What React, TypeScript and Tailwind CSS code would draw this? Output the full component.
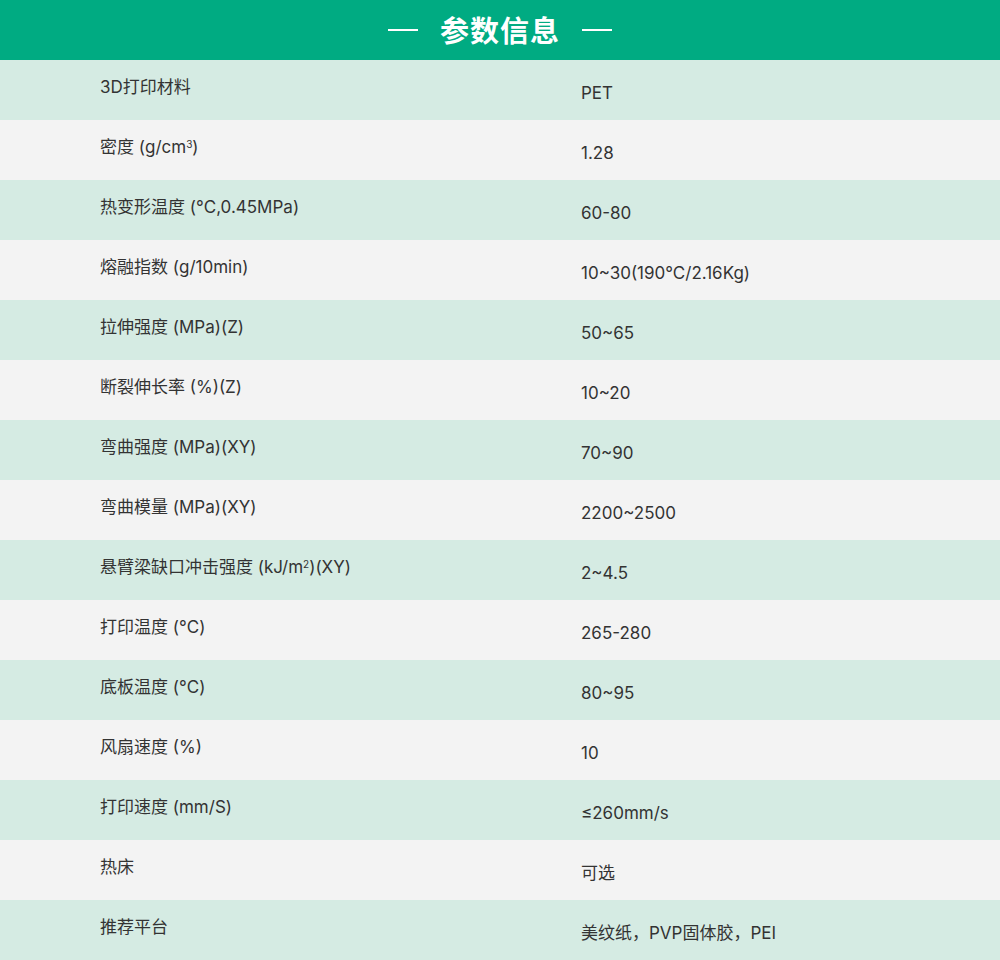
const rows: [string, React.ReactNode][] = [
  ["3D打印材料", "PET"],
  [<>密度 (g/cm<sup className="text-[10px]">3</sup>)</>, "1.28"],
  ["热变形温度 (°C,0.45MPa)", "60-80"],
  ["熔融指数 (g/10min)", "10~30(190°C/2.16Kg)"],
  ["拉伸强度 (MPa)(Z)", "50~65"],
  ["断裂伸长率 (%)(Z)", "10~20"],
  ["弯曲强度 (MPa)(XY)", "70~90"],
  ["弯曲模量 (MPa)(XY)", "2200~2500"],
  [<>悬臂梁缺口冲击强度 (kJ/m<sup className="text-[10px]">2</sup>)(XY)</>, "2~4.5"],
  ["打印温度 (°C)", "265-280"],
  ["底板温度 (°C)", "80~95"],
  ["风扇速度 (%)", "10"],
  ["打印速度 (mm/S)", "≤260mm/s"],
  ["热床", "可选"],
  ["推荐平台", "美纹纸，PVP固体胶，PEI"],
];

export default function App() {
  return (
    <div className="w-[1000px] h-[960px] text-[#333] text-[17px]" style={{ fontFamily: 'Inter, "Noto Sans CJK SC", sans-serif' }}>
      <div className="h-[60px] bg-[#00ab82] flex items-center justify-center gap-[22px] text-white">
        <div className="w-[30px] h-[2px] bg-white" />
        <div className="text-[29px] font-bold tracking-[1px]" style={{ fontFamily: '"Noto Sans CJK SC", sans-serif' }}>参数信息</div>
        <div className="w-[30px] h-[2px] bg-white" />
      </div>
      {rows.map(([k, v], i) => (
        <div key={i} className={`h-[60px] flex ${i % 2 === 0 ? "bg-[#d5ebe3]" : "bg-[#f3f3f3]"}`}>
          <div className="w-[581px] shrink-0 pl-[100px] pt-[15px] leading-[24px]">{k}</div>
          <div className="pt-[21px] leading-[24px]">{v}</div>
        </div>
      ))}
    </div>
  );
}
